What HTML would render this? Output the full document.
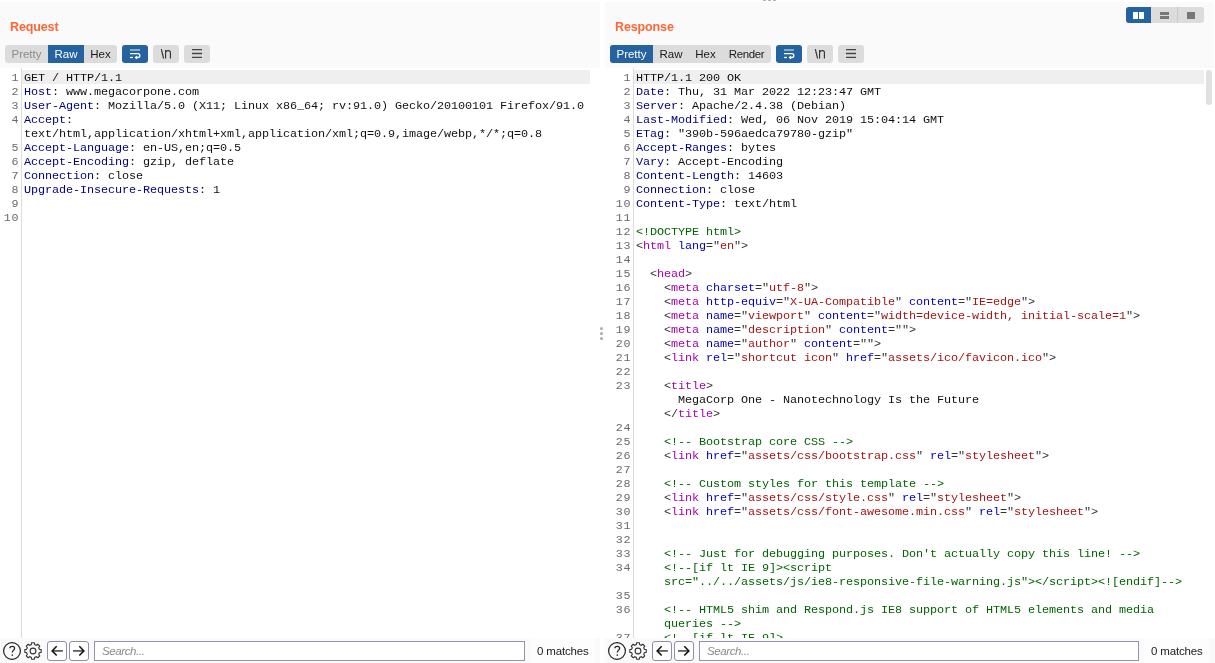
<!DOCTYPE html>
<html><head><meta charset="utf-8"><title>Repeater</title><style>
*{margin:0;padding:0;box-sizing:border-box}
html,body{width:1215px;height:663px;overflow:hidden;background:#fff;font-family:"Liberation Sans",sans-serif}
#root{position:absolute;left:0;top:0;width:1215px;height:663px;will-change:transform}
.hdr{position:absolute;top:2px;height:66px;background:#fafafa}
.title{position:absolute;top:20px;letter-spacing:-0.12px;font-size:12.5px;line-height:15px;font-weight:bold;color:#ff6633}
.seg{position:absolute;top:45px;height:18px;background:#dcdcdc;border-radius:3px;overflow:hidden}
.seg span{position:absolute;top:0;display:block;height:18px;line-height:18.5px;font-size:11.5px;text-align:center;color:#1a1a1a}
.seg span.on{background:#2462a0;color:#fff}
.seg span.dis{color:#8c8c8c}
.ib{position:absolute;top:45px;height:18px;width:26px;border-radius:3px;background:#dcdcdc}
.ib.on{background:#2462a0}
.ib svg{position:absolute;left:0;top:0}
.mono{font-family:"Liberation Mono",monospace;font-size:11.8px;letter-spacing:-0.08px;line-height:14px;white-space:pre}
.ed{position:absolute;top:71px;color:#111}
.gut{position:absolute;top:68px;height:570px;width:1px;background:#dcdcdc}
.ln{position:absolute;top:71px;text-align:right;color:#6a6a6a;font-size:11.67px;letter-spacing:0.6px}
.cur{position:absolute;top:70px;height:14px;background:#efefef}
.k{color:#000080}
.t{color:#aa00aa}
.a{color:#0000c0}
.v{color:#a31515}
.c{color:#006400}
.p{color:#333}
.bar{position:absolute;top:638px;height:25px;background:#fafafa}
.search{position:absolute;top:641px;height:20px;border:1px solid #9393a8;background:#fff;font-size:11.5px;letter-spacing:-0.4px;font-style:italic;color:#8a8a8a;padding-left:7px;line-height:19px}
.nb{position:absolute;top:641px;width:20px;height:20px;border:1px solid #8f8fa6;border-radius:3px;background:#fff}
.nb svg,.ic svg{position:absolute;left:0;top:0}
.ic{position:absolute;top:640px;width:22px;height:22px}
.match{position:absolute;top:645px;font-size:11.5px;letter-spacing:-0.15px;line-height:13px;color:#1a1a1a}
.mbg{position:absolute;top:638px;height:25px;background:#fdfdfd}
.sb{position:absolute;left:1206px;top:70px;width:6px;height:35px;border-radius:3px;background:#e0e0e0}
.dot{position:absolute;width:3px;height:3px;border-radius:50%}
</style></head><body><div id="root">
<div class="hdr" style="left:0;width:600px"></div>
<div class="title" style="left:10px">Request</div>
<div class="seg" style="left:5px;width:112px"><span class="dis" style="left:0;width:43px">Pretty</span><span class="on" style="left:43px;width:36px">Raw</span><span style="left:79px;width:33px">Hex</span></div>
<div class="ib on" style="left:122px"><svg width="26" height="18"><path d="M8 5H18" stroke="#a9c3e0" stroke-width="1.5"/><path d="M8 8.6H15.9a1.95 1.95 0 0 1 0 3.9H13.6" stroke="#fff" stroke-width="1.3" fill="none"/><path d="M14.9 11.1L13.5 12.5L14.9 13.9" stroke="#fff" stroke-width="1.15" fill="none"/><path d="M8 12.5H11" stroke="#fff" stroke-width="1.3"/></svg></div><div class="ib" style="left:153px"><svg width="26" height="18"><path d="M8.3 4.2L10.6 13.5" stroke="#333" stroke-width="1.15" fill="none"/><path d="M12.6 5V13.5M12.6 7.2C13.3 5.3 17.4 4.6 17.4 7.6V13.5" stroke="#333" stroke-width="1.15" fill="none"/></svg></div><div class="ib" style="left:184px"><svg width="26" height="18"><path d="M8 4.7H18M8 8.5H18M8 12.4H18" stroke="#444" stroke-width="1.3"/></svg></div>
<div class="gut" style="left:21px"></div><div class="cur" style="left:22px;width:568px"></div>
<div class="ln mono" style="left:1px;width:18px">1
2
3
4

5
6
7
8
9
10</div>
<div class="ed mono" style="left:24px">GET / HTTP/1.1
<span class="k">Host</span>: www.megacorpone.com
<span class="k">User-Agent</span>: Mozilla/5.0 (X11; Linux x86_64; rv:91.0) Gecko/20100101 Firefox/91.0
<span class="k">Accept</span>:
text/html,application/xhtml+xml,application/xml;q=0.9,image/webp,*/*;q=0.8
<span class="k">Accept-Language</span>: en-US,en;q=0.5
<span class="k">Accept-Encoding</span>: gzip, deflate
<span class="k">Connection</span>: close
<span class="k">Upgrade-Insecure-Requests</span>: 1

</div>
<div class="bar" style="left:0;width:600px"></div>
<div class="ic" style="left:1px"><svg width="22" height="22"><circle cx="11" cy="11" r="8.4" stroke="#222" stroke-width="1.2" fill="none"/><path d="M8.9 8.3C8.9 5.9 13.6 5.6 13.6 8.2C13.6 10 11.3 10.3 11.3 12.6" stroke="#222" stroke-width="1.3" fill="none"/><circle cx="11.3" cy="15" r="0.85" fill="#222"/></svg></div><div class="ic" style="left:22px"><svg width="22" height="22"><path d="M9.29 4.62 L9.70 2.80 L12.30 2.80 L12.71 4.62 L14.30 5.28 L15.88 4.29 L17.71 6.12 L16.72 7.70 L17.38 9.29 L19.20 9.70 L19.20 12.30 L17.38 12.71 L16.72 14.30 L17.71 15.88 L15.88 17.71 L14.30 16.72 L12.71 17.38 L12.30 19.20 L9.70 19.20 L9.29 17.38 L7.70 16.72 L6.12 17.71 L4.29 15.88 L5.28 14.30 L4.62 12.71 L2.80 12.30 L2.80 9.70 L4.62 9.29 L5.28 7.70 L4.29 6.12 L6.12 4.29 L7.70 5.28Z" stroke="#333" stroke-width="1.1" fill="none" stroke-linejoin="miter"/><circle cx="11" cy="11" r="2.9" stroke="#333" stroke-width="1.1" fill="none"/></svg></div><div class="nb" style="left:47px"><svg width="20" height="20"><path d="M14.8 8.9H4.6" stroke="#555" stroke-width="1.7" fill="none"/><path d="M8.7 4.3L4.1 8.9L8.7 13.5" stroke="#111" stroke-width="1.5" fill="none"/></svg></div><div class="nb" style="left:69px"><svg width="20" height="20"><path d="M3 8.9H13.2" stroke="#555" stroke-width="1.7" fill="none"/><path d="M9.3 4.3L13.9 8.9L9.3 13.5" stroke="#111" stroke-width="1.5" fill="none"/></svg></div>
<div class="mbg" style="left:530px;width:65px"></div><div class="search" style="left:94px;width:431px">Search...</div><div class="match" style="left:537px">0 matches</div>
<div class="hdr" style="left:605px;width:609px"></div>
<div class="dot" style="left:763px;top:-2px;background:#999"></div>
<div class="dot" style="left:768px;top:-2px;background:#999"></div>
<div class="dot" style="left:773px;top:-2px;background:#999"></div>
<div class="title" style="left:615px">Response</div>
<div class="seg" style="left:610px;width:161px"><span class="on" style="left:0;width:43px">Pretty</span><span style="left:43px;width:36px">Raw</span><span style="left:79px;width:33px">Hex</span><span style="left:112px;width:49px;letter-spacing:-0.4px">Render</span></div>
<div class="ib on" style="left:776px"><svg width="26" height="18"><path d="M8 5H18" stroke="#a9c3e0" stroke-width="1.5"/><path d="M8 8.6H15.9a1.95 1.95 0 0 1 0 3.9H13.6" stroke="#fff" stroke-width="1.3" fill="none"/><path d="M14.9 11.1L13.5 12.5L14.9 13.9" stroke="#fff" stroke-width="1.15" fill="none"/><path d="M8 12.5H11" stroke="#fff" stroke-width="1.3"/></svg></div><div class="ib" style="left:807px"><svg width="26" height="18"><path d="M8.3 4.2L10.6 13.5" stroke="#333" stroke-width="1.15" fill="none"/><path d="M12.6 5V13.5M12.6 7.2C13.3 5.3 17.4 4.6 17.4 7.6V13.5" stroke="#333" stroke-width="1.15" fill="none"/></svg></div><div class="ib" style="left:838px"><svg width="26" height="18"><path d="M8 4.7H18M8 8.5H18M8 12.4H18" stroke="#444" stroke-width="1.3"/></svg></div>
<div style="position:absolute;left:1126px;top:7px;width:78px;height:16px;border-radius:3px;background:#dcdcdc;overflow:hidden">
 <div style="position:absolute;left:0;top:0;width:25px;height:16px;background:#2462a0"></div>
 <div style="position:absolute;left:7px;top:4.5px;width:5px;height:7px;background:#fff"></div>
 <div style="position:absolute;left:13px;top:4.5px;width:5px;height:7px;background:#fff"></div>
 <div style="position:absolute;left:34px;top:4.5px;width:9px;height:3px;background:#777"></div>
 <div style="position:absolute;left:34px;top:9px;width:9px;height:3px;background:#777"></div>
 <div style="position:absolute;left:51px;top:0;width:1px;height:16px;background:#c8c8c8"></div>
 <div style="position:absolute;left:61px;top:4.5px;width:8px;height:7px;background:#777"></div>
</div>
<div class="gut" style="left:633px"></div><div class="cur" style="left:634px;width:570px"></div><div class="sb"></div>
<div class="dot" style="left:600px;top:327px;background:#aaa"></div>
<div class="dot" style="left:600px;top:332px;background:#aaa"></div>
<div class="dot" style="left:600px;top:337px;background:#aaa"></div>
<div class="ln mono" style="left:606px;width:25px">1
2
3
4
5
6
7
8
9
10
11
12
13
14
15
16
17
18
19
20
21
22
23


24
25
26
27
28
29
30
31
32
33
34

35
36

37</div>
<div class="ed mono" style="left:636px;height:567px;overflow:hidden">HTTP/1.1 200 OK
<span class="k">Date</span>: Thu, 31 Mar 2022 12:23:47 GMT
<span class="k">Server</span>: Apache/2.4.38 (Debian)
<span class="k">Last-Modified</span>: Wed, 06 Nov 2019 15:04:14 GMT
<span class="k">ETag</span>: "390b-596aedca79780-gzip"
<span class="k">Accept-Ranges</span>: bytes
<span class="k">Vary</span>: Accept-Encoding
<span class="k">Content-Length</span>: 14603
<span class="k">Connection</span>: close
<span class="k">Content-Type</span>: text/html

<span class="c">&lt;!DOCTYPE html&gt;</span>
<span class="p">&lt;</span><span class="t">html</span> <span class="a">lang</span><span class="p">="</span><span class="v">en</span><span class="p">"</span><span class="p">&gt;</span>

  <span class="p">&lt;</span><span class="t">head</span><span class="p">&gt;</span>
    <span class="p">&lt;</span><span class="t">meta</span> <span class="a">charset</span><span class="p">="</span><span class="v">utf-8</span><span class="p">"</span><span class="p">&gt;</span>
    <span class="p">&lt;</span><span class="t">meta</span> <span class="a">http-equiv</span><span class="p">="</span><span class="v">X-UA-Compatible</span><span class="p">"</span> <span class="a">content</span><span class="p">="</span><span class="v">IE=edge</span><span class="p">"</span><span class="p">&gt;</span>
    <span class="p">&lt;</span><span class="t">meta</span> <span class="a">name</span><span class="p">="</span><span class="v">viewport</span><span class="p">"</span> <span class="a">content</span><span class="p">="</span><span class="v">width=device-width, initial-scale=1</span><span class="p">"</span><span class="p">&gt;</span>
    <span class="p">&lt;</span><span class="t">meta</span> <span class="a">name</span><span class="p">="</span><span class="v">description</span><span class="p">"</span> <span class="a">content</span><span class="p">="</span><span class="v"></span><span class="p">"</span><span class="p">&gt;</span>
    <span class="p">&lt;</span><span class="t">meta</span> <span class="a">name</span><span class="p">="</span><span class="v">author</span><span class="p">"</span> <span class="a">content</span><span class="p">="</span><span class="v"></span><span class="p">"</span><span class="p">&gt;</span>
    <span class="p">&lt;</span><span class="t">link</span> <span class="a">rel</span><span class="p">="</span><span class="v">shortcut icon</span><span class="p">"</span> <span class="a">href</span><span class="p">="</span><span class="v">assets/ico/favicon.ico</span><span class="p">"</span><span class="p">&gt;</span>

    <span class="p">&lt;</span><span class="t">title</span><span class="p">&gt;</span>
      MegaCorp One - Nanotechnology Is the Future
    <span class="p">&lt;/</span><span class="t">title</span><span class="p">&gt;</span>

    <span class="c">&lt;!-- Bootstrap core CSS --&gt;</span>
    <span class="p">&lt;</span><span class="t">link</span> <span class="a">href</span><span class="p">="</span><span class="v">assets/css/bootstrap.css</span><span class="p">"</span> <span class="a">rel</span><span class="p">="</span><span class="v">stylesheet</span><span class="p">"</span><span class="p">&gt;</span>

    <span class="c">&lt;!-- Custom styles for this template --&gt;</span>
    <span class="p">&lt;</span><span class="t">link</span> <span class="a">href</span><span class="p">="</span><span class="v">assets/css/style.css</span><span class="p">"</span> <span class="a">rel</span><span class="p">="</span><span class="v">stylesheet</span><span class="p">"</span><span class="p">&gt;</span>
    <span class="p">&lt;</span><span class="t">link</span> <span class="a">href</span><span class="p">="</span><span class="v">assets/css/font-awesome.min.css</span><span class="p">"</span> <span class="a">rel</span><span class="p">="</span><span class="v">stylesheet</span><span class="p">"</span><span class="p">&gt;</span>


    <span class="c">&lt;!-- Just for debugging purposes. Don't actually copy this line! --&gt;</span>
    <span class="c">&lt;!--[if lt IE 9]&gt;&lt;script</span>
    <span class="c">src="../../assets/js/ie8-responsive-file-warning.js"&gt;&lt;/script&gt;&lt;![endif]--&gt;</span>

    <span class="c">&lt;!-- HTML5 shim and Respond.js IE8 support of HTML5 elements and media</span>
    <span class="c">queries --&gt;</span>
    <span class="c">&lt;!--[if lt IE 9]&gt;</span></div>
<div class="bar" style="left:605px;width:610px"></div>
<div class="ic" style="left:606px"><svg width="22" height="22"><circle cx="11" cy="11" r="8.4" stroke="#222" stroke-width="1.2" fill="none"/><path d="M8.9 8.3C8.9 5.9 13.6 5.6 13.6 8.2C13.6 10 11.3 10.3 11.3 12.6" stroke="#222" stroke-width="1.3" fill="none"/><circle cx="11.3" cy="15" r="0.85" fill="#222"/></svg></div><div class="ic" style="left:627px"><svg width="22" height="22"><path d="M9.29 4.62 L9.70 2.80 L12.30 2.80 L12.71 4.62 L14.30 5.28 L15.88 4.29 L17.71 6.12 L16.72 7.70 L17.38 9.29 L19.20 9.70 L19.20 12.30 L17.38 12.71 L16.72 14.30 L17.71 15.88 L15.88 17.71 L14.30 16.72 L12.71 17.38 L12.30 19.20 L9.70 19.20 L9.29 17.38 L7.70 16.72 L6.12 17.71 L4.29 15.88 L5.28 14.30 L4.62 12.71 L2.80 12.30 L2.80 9.70 L4.62 9.29 L5.28 7.70 L4.29 6.12 L6.12 4.29 L7.70 5.28Z" stroke="#333" stroke-width="1.1" fill="none" stroke-linejoin="miter"/><circle cx="11" cy="11" r="2.9" stroke="#333" stroke-width="1.1" fill="none"/></svg></div><div class="nb" style="left:652px"><svg width="20" height="20"><path d="M14.8 8.9H4.6" stroke="#555" stroke-width="1.7" fill="none"/><path d="M8.7 4.3L4.1 8.9L8.7 13.5" stroke="#111" stroke-width="1.5" fill="none"/></svg></div><div class="nb" style="left:674px"><svg width="20" height="20"><path d="M3 8.9H13.2" stroke="#555" stroke-width="1.7" fill="none"/><path d="M9.3 4.3L13.9 8.9L9.3 13.5" stroke="#111" stroke-width="1.5" fill="none"/></svg></div>
<div class="mbg" style="left:1144px;width:65px"></div><div class="search" style="left:699px;width:440px">Search...</div><div class="match" style="left:1151px">0 matches</div>
</div></body></html>
